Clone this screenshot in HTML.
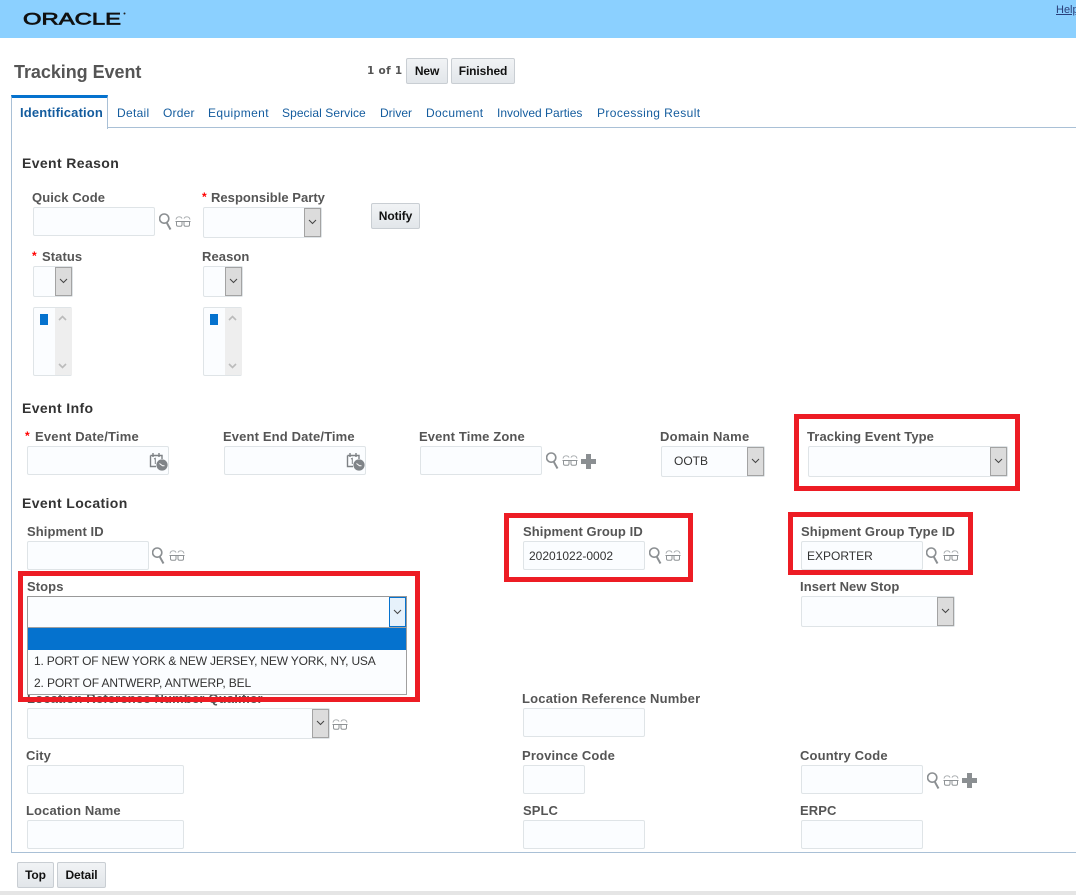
<!DOCTYPE html>
<html lang="en">
<head>
<meta charset="utf-8">
<title>Tracking Event</title>
<style>
html,body{margin:0;padding:0;background:#fff}
body{position:relative;width:1076px;height:895px;overflow:hidden;font-family:"Liberation Sans",sans-serif;font-size:12px;color:#333}
body>*{position:absolute}
.l{font-weight:bold;font-size:13px;line-height:16px;color:#555;white-space:nowrap;letter-spacing:.08px;margin-top:1px}
.h{font-weight:bold;font-size:14px;line-height:16px;color:#333;white-space:nowrap;letter-spacing:.38px}
.a{color:#f00;font-weight:bold;font-size:12px;line-height:16px}
.t{font-size:12px;line-height:16px;color:#145c9e;white-space:nowrap}
.i{box-sizing:border-box;background:#fbfdff;border:1px solid #dfe4e7;border-radius:2px;height:29px;font-size:12px;line-height:28px;padding-left:5px;color:#333}
.s{box-sizing:border-box;background:#fbfdff;border:1px solid #dfe4e7;border-radius:2px;height:31px}
.b{box-sizing:border-box;background:#dcdcdc;border:1px solid #a3a3a3;height:29px;width:17px}
.b svg{position:absolute;left:3px;top:10px}
.btn{box-sizing:border-box;height:26px;background:linear-gradient(#f1f3f5,#e2e6ea);border:1px solid #c9ced3;border-radius:2px;font-weight:bold;font-size:12px;line-height:24px;text-align:center;color:#111;letter-spacing:-.1px}
.r{box-sizing:border-box;border:5px solid #ed1c24}
.lb{box-sizing:border-box;background:#fbfdff;border:1px solid #dfe4e7;border-radius:2px;width:39px;height:69px}
.lb i{position:absolute;left:6px;top:6px;width:8px;height:11px;background:#0572ce}
.lb u{position:absolute;left:21px;top:0;width:17px;height:67px;background:#eee}
.lb svg{position:absolute;left:24px}
</style>
</head>
<body>
<svg width="0" height="0" style="left:0;top:0">
<defs>
<symbol id="chev" viewBox="0 0 9 6"><path d="M1 1 L4.5 4.5 L8 1" fill="none" stroke="#444" stroke-width="1"/></symbol>
<symbol id="mag" viewBox="0 0 13 18"><circle cx="5.2" cy="6.6" r="4.6" fill="none" stroke="#8b8f92" stroke-width="1.6"/><path d="M7.8 10.8 L11.5 17.5" fill="none" stroke="#8b8f92" stroke-width="2"/></symbol>
<symbol id="gl" viewBox="0 0 16 12"><path d="M0.5 5.5 H15.5 M1.5 5.5 V8.8 a1.5 1.5 0 0 0 1.5 1.5 H5.5 a1.5 1.5 0 0 0 1.5 -1.5 V5.5 M9 5.5 V8.8 a1.5 1.5 0 0 0 1.5 1.5 H13 a1.5 1.5 0 0 0 1.5 -1.5 V5.5" fill="none" stroke="#8f9396" stroke-width="1"/><path d="M1 3.6 Q1.5 .8 4 .8 Q6.5 .8 7 2.6 M9 2.6 Q9.5 .8 12 .8 Q14.5 .8 15 3.6" fill="none" stroke="#a4a8ab" stroke-width=".9"/></symbol>
<symbol id="plus" viewBox="0 0 15 15"><path d="M5 0 H10 V5 H15 V10 H10 V15 H5 V10 H0 V5 H5 Z" fill="#8b8f92"/></symbol>
<symbol id="cal" viewBox="0 0 19 19"><path d="M1.5 3.5 H13 V7 M1.5 3.5 V14.5 H7 M4 1 V5 M10 1 V5" fill="none" stroke="#7d8185" stroke-width="1.4"/><path d="M5 7 L6.3 6.3 V12" fill="none" stroke="#7d8185" stroke-width="1"/><circle cx="13" cy="13" r="5.6" fill="#808488"/><path d="M10.5 11.5 L13.5 13.8 H15.5" fill="none" stroke="#fff" stroke-width="1"/></symbol>
<symbol id="up" viewBox="0 0 9 6"><path d="M1 5 L4.5 1.5 L8 5" fill="none" stroke="#bbb" stroke-width="1.6"/></symbol>
<symbol id="dn" viewBox="0 0 9 6"><path d="M1 1 L4.5 4.5 L8 1" fill="none" stroke="#bbb" stroke-width="1.6"/></symbol>
</defs>
</svg>

<!-- Header -->
<div style="left:0;top:0;width:1076px;height:38px;background:#8bd0ff"></div>
<svg style="left:22px;top:9px" width="106" height="18" viewBox="0 0 106 18"><text x="1" y="15.3" font-family="Liberation Sans" font-size="17" fill="#111" stroke="#111" stroke-width=".7" textLength="98" lengthAdjust="spacingAndGlyphs">ORACLE</text><circle cx="102.5" cy="4.5" r="1" fill="#222"/></svg>
<div style="left:1056px;top:3px;font-size:11px;line-height:14px;color:#2a3f7a;text-decoration:underline;white-space:nowrap">Help</div>

<!-- Title bar -->
<div style="left:14px;top:61px;font-weight:bold;font-size:18px;line-height:22px;color:#555;white-space:nowrap;letter-spacing:-.05px">Tracking Event</div>
<div style="left:367px;top:63px;font-family:'DejaVu Sans',sans-serif;font-weight:bold;font-size:10.5px;line-height:16px;color:#555;white-space:nowrap;letter-spacing:.3px">1 of 1</div>
<div class="btn" style="left:406px;top:58px;width:42px">New</div>
<div class="btn" style="left:451px;top:58px;width:64px">Finished</div>

<!-- Tabs frame -->
<div style="left:107px;top:127px;width:969px;height:1px;background:#a9c0d6"></div>
<div style="left:11px;top:128px;width:1px;height:725px;background:#a9c0d6"></div>
<div style="left:11px;top:852px;width:1065px;height:1px;background:#a9c0d6"></div>
<div style="box-sizing:border-box;left:11px;top:95px;width:97px;height:34px;background:#fff;border-top:3px solid #0572ce;border-right:1px solid #a9c0d6;border-left:1px solid #a9c0d6"></div>
<div style="left:20px;top:105px;font-weight:bold;font-size:13px;line-height:16px;color:#145c9e;white-space:nowrap;letter-spacing:.15px">Identification</div>
<div class="t" style="left:117px;top:105px;letter-spacing:.3px">Detail</div>
<div class="t" style="left:163px;top:105px;letter-spacing:.2px">Order</div>
<div class="t" style="left:208px;top:105px;letter-spacing:.4px">Equipment</div>
<div class="t" style="left:282px;top:105px;letter-spacing:.07px">Special Service</div>
<div class="t" style="left:380px;top:105px">Driver</div>
<div class="t" style="left:426px;top:105px;letter-spacing:.35px">Document</div>
<div class="t" style="left:497px;top:105px">Involved Parties</div>
<div class="t" style="left:597px;top:105px;letter-spacing:.4px">Processing Result</div>

<!-- Event Reason -->
<div class="h" style="left:22px;top:155px">Event Reason</div>
<div class="l" style="left:32px;top:189px">Quick Code</div>
<div class="i" style="left:33px;top:207px;width:122px"></div>
<svg style="left:159px;top:212px" width="13" height="18"><use href="#mag"/></svg>
<svg style="left:175px;top:216px" width="16" height="12"><use href="#gl"/></svg>
<div class="a" style="left:202px;top:189px">*</div>
<div class="l" style="left:211px;top:189px;letter-spacing:.03px">Responsible Party</div>
<div class="s" style="left:203px;top:207px;width:119px"></div>
<div class="b" style="left:304px;top:208px"><svg width="9" height="6"><use href="#chev"/></svg></div>
<div class="btn" style="left:371px;top:203px;width:49px">Notify</div>

<div class="a" style="left:32px;top:248px">*</div>
<div class="l" style="left:42px;top:248px">Status</div>
<div class="s" style="left:33px;top:266px;width:40px"></div>
<div class="b" style="left:55px;top:267px"><svg width="9" height="6"><use href="#chev"/></svg></div>
<div class="l" style="left:202px;top:248px">Reason</div>
<div class="s" style="left:203px;top:266px;width:40px"></div>
<div class="b" style="left:225px;top:267px"><svg width="9" height="6"><use href="#chev"/></svg></div>

<div class="lb" style="left:33px;top:307px"><i></i><u></u><svg style="top:7px" width="9" height="6"><use href="#up"/></svg><svg style="top:55px" width="9" height="6"><use href="#dn"/></svg></div>
<div class="lb" style="left:203px;top:307px"><i></i><u></u><svg style="top:7px" width="9" height="6"><use href="#up"/></svg><svg style="top:55px" width="9" height="6"><use href="#dn"/></svg></div>

<!-- Event Info -->
<div class="h" style="left:22px;top:400px">Event Info</div>
<div class="a" style="left:25px;top:428px">*</div>
<div class="l" style="left:35px;top:428px;letter-spacing:.2px">Event Date/Time</div>
<div class="i" style="left:27px;top:446px;width:142px"></div>
<svg style="left:149px;top:452px" width="19" height="19"><use href="#cal"/></svg>
<div class="l" style="left:223px;top:428px;letter-spacing:.14px">Event End Date/Time</div>
<div class="i" style="left:224px;top:446px;width:142px"></div>
<svg style="left:346px;top:452px" width="19" height="19"><use href="#cal"/></svg>
<div class="l" style="left:419px;top:428px;letter-spacing:.14px">Event Time Zone</div>
<div class="i" style="left:420px;top:446px;width:122px"></div>
<svg style="left:546px;top:451px" width="13" height="18"><use href="#mag"/></svg>
<svg style="left:562px;top:455px" width="16" height="12"><use href="#gl"/></svg>
<svg style="left:581px;top:454px" width="15" height="15"><use href="#plus"/></svg>
<div class="l" style="left:660px;top:428px;letter-spacing:.25px">Domain Name</div>
<div class="s" style="left:661px;top:446px;width:104px;font-size:12px;line-height:29px;padding-left:12px;color:#333">OOTB</div>
<div class="b" style="left:747px;top:447px"><svg width="9" height="6"><use href="#chev"/></svg></div>
<div class="l" style="left:807px;top:428px">Tracking Event Type</div>
<div class="s" style="left:808px;top:446px;width:200px"></div>
<div class="b" style="left:990px;top:447px"><svg width="9" height="6"><use href="#chev"/></svg></div>

<!-- Event Location -->
<div class="h" style="left:22px;top:495px">Event Location</div>
<div class="l" style="left:27px;top:523px">Shipment ID</div>
<div class="i" style="left:27px;top:541px;width:122px"></div>
<svg style="left:152px;top:546px" width="13" height="18"><use href="#mag"/></svg>
<svg style="left:169px;top:550px" width="16" height="12"><use href="#gl"/></svg>
<div class="l" style="left:523px;top:523px">Shipment Group ID</div>
<div class="i" style="left:523px;top:541px;width:122px">20201022-0002</div>
<svg style="left:649px;top:546px" width="13" height="18"><use href="#mag"/></svg>
<svg style="left:665px;top:550px" width="16" height="12"><use href="#gl"/></svg>
<div class="l" style="left:801px;top:523px;letter-spacing:.12px">Shipment Group Type ID</div>
<div class="i" style="left:801px;top:541px;width:122px">EXPORTER</div>
<svg style="left:926px;top:546px" width="13" height="18"><use href="#mag"/></svg>
<svg style="left:943px;top:550px" width="16" height="12"><use href="#gl"/></svg>

<div class="l" style="left:800px;top:578px">Insert New Stop</div>
<div class="s" style="left:801px;top:596px;width:154px"></div>
<div class="b" style="left:937px;top:597px"><svg width="9" height="6"><use href="#chev"/></svg></div>

<div class="l" style="left:27px;top:690px;letter-spacing:.17px">Location Reference Number Qualifier</div>
<div class="s" style="left:27px;top:708px;width:303px"></div>
<div class="b" style="left:312px;top:709px"><svg width="9" height="6"><use href="#chev"/></svg></div>
<svg style="left:332px;top:719px" width="16" height="12"><use href="#gl"/></svg>
<div class="l" style="left:522px;top:690px;letter-spacing:.2px">Location Reference Number</div>
<div class="i" style="left:523px;top:708px;width:122px"></div>

<div class="l" style="left:26px;top:747px">City</div>
<div class="i" style="left:27px;top:765px;width:157px"></div>
<div class="l" style="left:522px;top:747px;letter-spacing:.15px">Province Code</div>
<div class="i" style="left:523px;top:765px;width:62px"></div>
<div class="l" style="left:800px;top:747px;letter-spacing:.15px">Country Code</div>
<div class="i" style="left:801px;top:765px;width:122px"></div>
<svg style="left:927px;top:771px" width="13" height="18"><use href="#mag"/></svg>
<svg style="left:943px;top:775px" width="16" height="12"><use href="#gl"/></svg>
<svg style="left:962px;top:773px" width="15" height="15"><use href="#plus"/></svg>

<div class="l" style="left:26px;top:802px;letter-spacing:.12px">Location Name</div>
<div class="i" style="left:27px;top:820px;width:157px"></div>
<div class="l" style="left:523px;top:802px">SPLC</div>
<div class="i" style="left:523px;top:820px;width:122px"></div>
<div class="l" style="left:800px;top:802px">ERPC</div>
<div class="i" style="left:801px;top:820px;width:122px"></div>

<!-- Stops with open dropdown -->
<div class="l" style="left:27px;top:578px">Stops</div>
<div style="box-sizing:border-box;left:27px;top:596px;width:380px;height:32px;background:#fbfdff;border:1px solid #999"></div>
<div style="box-sizing:border-box;left:389px;top:597px;width:17px;height:30px;background:#e6f1fb;border:1px solid #0572ce"><svg style="position:absolute;left:3px;top:11px" width="9" height="6"><use href="#chev"/></svg></div>
<div style="box-sizing:border-box;left:27px;top:627px;width:380px;height:68px;background:#fbfdff;border:1px solid #a0a0a0"></div>
<div style="left:28px;top:628px;width:378px;height:22px;background:#0572ce"></div>
<div style="left:34px;top:653px;font-size:12px;line-height:16px;color:#333;white-space:nowrap;letter-spacing:-.18px">1. PORT OF NEW YORK &amp; NEW JERSEY, NEW YORK, NY, USA</div>
<div style="left:34px;top:675px;font-size:12px;line-height:16px;color:#333;white-space:nowrap;letter-spacing:-.13px">2. PORT OF ANTWERP, ANTWERP, BEL</div>

<!-- Footer -->
<div class="btn" style="left:17px;top:862px;width:37px">Top</div>
<div class="btn" style="left:57px;top:862px;width:49px">Detail</div>
<div style="left:0;top:891px;width:1076px;height:4px;background:#e5e5e5"></div>

<!-- Red annotation boxes -->
<div class="r" style="left:794px;top:414px;width:226px;height:77px"></div>
<div class="r" style="left:504px;top:513px;width:189px;height:69px"></div>
<div class="r" style="left:788px;top:512px;width:185px;height:63px"></div>
<div class="r" style="left:18px;top:571px;width:402px;height:131px"></div>
</body>
</html>
